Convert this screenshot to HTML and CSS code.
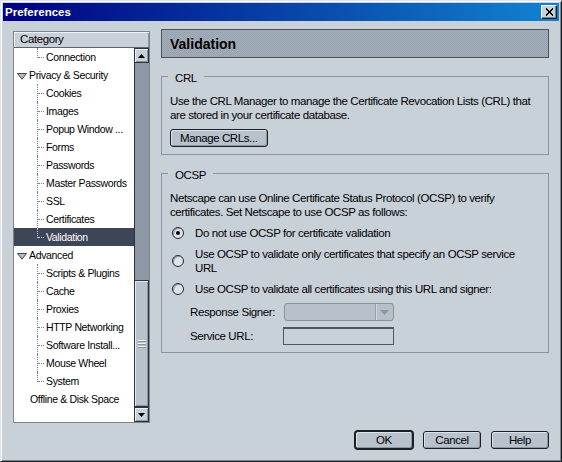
FILE: index.html
```html
<!DOCTYPE html>
<html>
<head>
<meta charset="utf-8">
<title>Preferences</title>
<link rel="stylesheet" href="styles.css">
</head>
<body>
<div class="window">
  <div class="titlebar">
    <span class="title">Preferences</span>
    <span class="close"><svg width="9" height="8" viewBox="0 0 9 8"><path d="M1 0.5 L8 7.5 M8 0.5 L1 7.5" stroke="#000" stroke-width="1.8" shape-rendering="crispEdges"/></svg></span>
  </div>
  <div class="content">
    <div class="main">
      <div class="sidebar">
        <div class="tree-header">Category</div>
        <div class="tree-body">
          <ul class="tree">
            <li class="row child last">Connection</li>
            <li class="row top"><svg class="twisty" width="10" height="7" viewBox="0 0 10 7"><polygon points="0.5,0.5 9.5,0.5 5,6.2" fill="#b4bec8" stroke="#3c4450" stroke-width="1"/></svg>Privacy &amp; Security</li>
            <li class="row child">Cookies</li>
            <li class="row child">Images</li>
            <li class="row child">Popup Window ...</li>
            <li class="row child">Forms</li>
            <li class="row child">Passwords</li>
            <li class="row child">Master Passwords</li>
            <li class="row child">SSL</li>
            <li class="row child">Certificates</li>
            <li class="row child last selected">Validation</li>
            <li class="row top"><svg class="twisty" width="10" height="7" viewBox="0 0 10 7"><polygon points="0.5,0.5 9.5,0.5 5,6.2" fill="#b4bec8" stroke="#3c4450" stroke-width="1"/></svg>Advanced</li>
            <li class="row child">Scripts &amp; Plugins</li>
            <li class="row child">Cache</li>
            <li class="row child">Proxies</li>
            <li class="row child">HTTP Networking</li>
            <li class="row child">Software Install...</li>
            <li class="row child">Mouse Wheel</li>
            <li class="row child last">System</li>
            <li class="row plain">Offline &amp; Disk Space</li>
          </ul>
          <div class="scrollbar">
            <div class="sb-btn"><svg width="7" height="4" viewBox="0 0 7 4"><polygon points="3.5,0 7,4 0,4" fill="#000"/></svg></div>
            <div class="sb-track"></div>
            <div class="sb-thumb"><span class="grip"></span><span class="grip"></span><span class="grip"></span></div>
            <div class="sb-btn"><svg width="7" height="4" viewBox="0 0 7 4"><polygon points="0,0 7,0 3.5,4" fill="#000"/></svg></div>
          </div>
        </div>
      </div>
      <div class="panel">
        <div class="panel-header">Validation</div>
        <fieldset class="group">
          <legend>CRL</legend>
          <p class="text">Use the CRL Manager to manage the Certificate Revocation Lists (CRL) that<br>are stored in your certificate database.</p>
          <button class="btn manage">Manage CRLs...</button>
        </fieldset>
        <fieldset class="group">
          <legend>OCSP</legend>
          <p class="text">Netscape can use Online Certificate Status Protocol (OCSP) to verify<br>certificates. Set Netscape to use OCSP as follows:</p>
          <div class="opt"><span class="radio checked"></span><span>Do not use OCSP for certificate validation</span></div>
          <div class="opt"><span class="radio"></span><span>Use OCSP to validate only certificates that specify an OCSP service<br>URL</span></div>
          <div class="opt"><span class="radio"></span><span>Use OCSP to validate all certificates using this URL and signer:</span></div>
          <div class="field first"><span class="label">Response Signer:</span><span class="select"><span class="select-arrow"><svg width="9" height="5" viewBox="0 0 9 5"><polygon points="0,0 9,0 4.5,5" fill="#8c96a0"/></svg></span></span></div>
          <div class="field"><span class="label">Service URL:</span><span class="input"></span></div>
        </fieldset>
      </div>
    </div>
    <div class="footer">
      <button class="btn default">OK</button>
      <button class="btn">Cancel</button>
      <button class="btn">Help</button>
    </div>
  </div>
</div>
</body>
</html>
```

FILE: styles.css
```css
* { box-sizing: border-box; }
html, body { margin: 0; padding: 0; }
body {
  width: 562px;
  height: 462px;
  overflow: hidden;
  background: #c8d0d8;
  font-family: "Liberation Sans", Arial, sans-serif;
  font-size: 11.5px;
  letter-spacing: -0.4px;
  color: #000;
}
.window {
  width: 562px;
  height: 462px;
  display: flex;
  flex-direction: column;
  background: #c8d0d8;
  border: 1px solid;
  border-color: #dfe5eb #1c2024 #1c2024 #dfe5eb;
  box-shadow: inset 1px 1px 0 #ffffff, inset -1px -1px 0 #7c848c;
  padding: 2px;
}
.titlebar {
  height: 18px;
  flex: none;
  display: flex;
  align-items: center;
  justify-content: space-between;
  padding: 0 2px;
  background: linear-gradient(to right, #000080, #1084d0);
}
.title {
  font-weight: bold;
  font-size: 11.5px;
  letter-spacing: 0;
  color: #fff;
}
.close {
  width: 16px;
  height: 14px;
  display: flex;
  align-items: center;
  justify-content: center;
  background: #c8d0d8;
  border: 1px solid;
  border-color: #ffffff #1c2024 #1c2024 #ffffff;
  box-shadow: inset -1px -1px 0 #7c848c;
}
.content {
  flex: 1;
  display: flex;
  flex-direction: column;
  padding: 8px 10px 10px;
  min-height: 0;
}
.main {
  flex: 1;
  display: flex;
  gap: 11px;
  min-height: 0;
}

/* sidebar tree */
.sidebar {
  width: 137px;
  flex: none;
  margin-top: 2px;
  display: flex;
  flex-direction: column;
  border: 1px solid #7c848c;
}
.tree-header {
  height: 16px;
  flex: none;
  padding-left: 6px;
  line-height: 15px;
  background: #c8d0d8;
  border-bottom: 1px solid #5c646c;
  box-shadow: inset 1px 1px 0 #eef2f6, inset -1px 0 0 #8c949c;
}
.tree-body {
  flex: 1;
  display: flex;
  min-height: 0;
}
.tree {
  list-style: none;
  margin: 0;
  padding: 0;
  width: 120px;
  flex: none;
  background: #fff;
  overflow: hidden;
}
.row {
  position: relative;
  height: 18px;
  line-height: 18px;
  font-size: 10.5px;
  letter-spacing: -0.35px;
  white-space: nowrap;
  overflow: hidden;
}
.row.top { padding-left: 3px; }
.row.plain { padding-left: 16px; }
.twisty { margin-right: 2px; vertical-align: -1px; }
.row.child { padding-left: 32px; }
.row.child::before {
  content: "";
  position: absolute;
  left: 23px;
  top: 0;
  height: 18px;
  border-left: 1px dotted #7c848c;
}
.row.child.last::before { height: 10px; }
.row.child::after {
  content: "";
  position: absolute;
  left: 24px;
  top: 9px;
  width: 6px;
  border-top: 1px dotted #7c848c;
}
.row.selected {
  background: #3c4656;
  color: #fff;
}
.row.selected::before, .row.selected::after { border-color: #c8d0d8; }

.scrollbar {
  width: 15px;
  flex: none;
  display: flex;
  flex-direction: column;
  background: #8e98a4;
  border-left: 1px solid #2c343c;
}
.sb-btn {
  height: 15px;
  flex: none;
  display: flex;
  align-items: center;
  justify-content: center;
  background: #c8d0d8;
  border: 1px solid #2c343c;
  border-left: none;
  box-shadow: inset 1px 1px 0 #eef2f6, inset -1px -1px 0 #8c949c;
}
.sb-track { flex: 1; }
.sb-thumb {
  height: 127px;
  flex: none;
  display: flex;
  flex-direction: column;
  align-items: center;
  justify-content: center;
  gap: 2px;
  background: #b8c2cc;
  border: 1px solid #2c343c;
  border-left: none;
  box-shadow: inset 1px 1px 0 #e4eaf0, inset -1px -1px 0 #8c949c;
}
.grip {
  width: 8px;
  height: 1px;
  background: #eef2f6;
  box-shadow: 0 1px 0 #8c949c;
}

/* right panel */
.panel {
  width: 388px;
  flex: none;
  align-self: flex-start;
  display: flex;
  flex-direction: column;
}
.panel-header {
  height: 29px;
  padding-left: 8px;
  display: flex;
  align-items: center;
  font-weight: bold;
  font-size: 14px;
  letter-spacing: 0;
  border: 1px solid #4a525a;
  background-color: #9ca8b4;
  background-image: repeating-conic-gradient(#a2aebb 0 25%, #96a2ae 0 50%);
  background-size: 2px 2px;
}
.group {
  margin: 9px 0 0;
  padding: 8px 8px 7px;
  border: 1px solid #8c949c;
  min-width: 0;
}
.group legend {
  padding: 4px 7px 0;
  margin-left: -2px;
  line-height: 15px;
}
.text {
  margin: 0;
  line-height: 14px;
  white-space: nowrap;
}
.btn {
  height: 18px;
  padding: 0 9px;
  font-family: inherit;
  font-size: 11.5px;
  letter-spacing: -0.4px;
  line-height: 16px;
  color: #000;
  background: #b8c2cc;
  border: 1px solid #1c2024;
  border-radius: 3px;
  box-shadow: inset 1px 1px 0 #dde3e9, inset -1px -1px 0 #8c96a0;
}
.manage {
  display: block;
  margin-top: 7px;
}
.opt {
  display: flex;
  align-items: center;
  margin-top: 7px;
  line-height: 14px;
  white-space: nowrap;
}
.radio {
  width: 12px;
  height: 12px;
  flex: none;
  margin: 0 11px 0 2px;
  border-radius: 50%;
  border: 1px solid #23282d;
  background: #dfe5eb;
  box-shadow: inset 1px 1px 0 #9aa2aa;
  display: flex;
  align-items: center;
  justify-content: center;
}
.radio.checked::after {
  content: "";
  width: 4px;
  height: 4px;
  border-radius: 50%;
  background: #000;
}
.field {
  display: flex;
  align-items: center;
  padding-left: 20px;
  margin-top: 6px;
  white-space: nowrap;
}
.field.first { margin-top: 7px; }
.label { width: 94px; flex: none; }
.select {
  width: 110px;
  height: 18px;
  display: flex;
  justify-content: flex-end;
  background: #b6c0ca;
  border: 1px solid #8a929a;
  border-radius: 3px;
}
.select-arrow {
  width: 18px;
  display: flex;
  align-items: center;
  justify-content: center;
  border-left: 1px solid #9aa2aa;
  box-shadow: inset 1px 0 0 #d4dae0;
}
.input {
  width: 111px;
  height: 18px;
  margin-left: -1px;
  background: #c8d0d8;
  border: 1px solid #50585f;
  border-top-width: 2px;
}

/* footer */
.footer {
  flex: none;
  margin-top: 8px;
  display: flex;
  justify-content: flex-end;
  gap: 10px;
}
.footer .btn { width: 58px; padding: 0; }
.btn.default {
  box-shadow: 0 0 0 1px #1c2024, inset 1px 1px 0 #dde3e9, inset -1px -1px 0 #8c96a0;
}
```
